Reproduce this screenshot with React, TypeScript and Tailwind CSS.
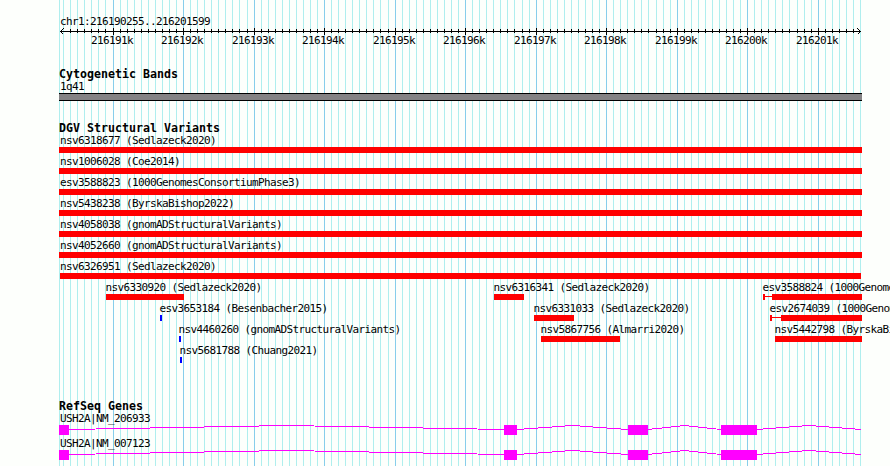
import React from 'react';

interface Feature {
  name: string;
  start: number;
  end: number;
  color?: string;
  // small leading block, joined to the body by a thin line
  leadEnd?: number;
  bodyStart?: number;
}

const TRACK_START = 59;
const TRACK_END = 862;
const PX_PER_100 = 7.0516;
const FIRST_MAJOR = 113.03;

const tickIndexes = Array.from({ length: 114 }, (_, i) => i - 7);
const ticks = tickIndexes.map((k) => ({
  x: Math.floor(FIRST_MAJOR + PX_PER_100 * k),
  major: k % 10 === 0,
  label: `${216191 + k / 10}k`
}));
const majorTicks = ticks.filter((tick) => tick.major);

const full = (name: string): Feature[] => [{ name, start: TRACK_START, end: TRACK_END }];

const variantRows: Feature[][] = [
  full('nsv6318677 (Sedlazeck2020)'),
  full('nsv1006028 (Coe2014)'),
  full('esv3588823 (1000GenomesConsortiumPhase3)'),
  full('nsv5438238 (ByrskaBishop2022)'),
  full('nsv4058038 (gnomADStructuralVariants)'),
  full('nsv4052660 (gnomADStructuralVariants)'),
  [{ name: 'nsv6326951 (Sedlazeck2020)', start: 60, end: 861 }],
  [
    { name: 'nsv6330920 (Sedlazeck2020)', start: 106, end: 184 },
    { name: 'nsv6316341 (Sedlazeck2020)', start: 494, end: 524 },
    { name: 'esv3588824 (1000GenomesConsortiumPhase3)', start: 763, end: TRACK_END, leadEnd: 765, bodyStart: 772 }
  ],
  [
    { name: 'esv3653184 (Besenbacher2015)', start: 160, end: 162, color: '#0000ff' },
    { name: 'nsv6331033 (Sedlazeck2020)', start: 534, end: 574 },
    { name: 'esv2674039 (1000GenomesConsortiumPhase3)', start: 770, end: TRACK_END, leadEnd: 772, bodyStart: 781 }
  ],
  [
    { name: 'nsv4460260 (gnomADStructuralVariants)', start: 179, end: 181, color: '#0000ff' },
    { name: 'nsv5867756 (Almarri2020)', start: 541, end: 620 },
    { name: 'nsv5442798 (ByrskaBishop2022)', start: 775, end: TRACK_END }
  ],
  [{ name: 'nsv5681788 (Chuang2021)', start: 180, end: 182, color: '#0000ff' }]
];

const genes = ['USH2A|NM_206933', 'USH2A|NM_007123'];
const exons = [[59, 69], [504, 517], [628, 648], [721, 757]];
const introns = [[69, 504], [517, 628], [648, 721], [757, 861]];

const Heading: React.FC<{ children: React.ReactNode }> = ({ children }) => (
  <h2 className="h-3 pl-[59px] text-[11.63px] leading-3 font-bold tracking-normal whitespace-pre">{children}</h2>
);

const Grid: React.FC = () => (
  <svg className="absolute inset-0" width="890" height="466" shapeRendering="crispEdges">
    <rect x={TRACK_START} y="0" width="1" height="466" fill="#afeeee" />
    {ticks.map((tick) => (
      <rect key={tick.x} x={tick.x} y="0" width="1" height="466" fill={tick.major ? '#87ceeb' : '#afeeee'} />
    ))}
  </svg>
);

const Ruler: React.FC = () => (
  <div className="flex flex-col">
    <svg className="block" width="890" height="8" shapeRendering="crispEdges">
      <rect x="60" y="4" width="801" height="1" />
      {ticks.slice(1, -1).map((tick) => (
        <rect key={tick.x} x={tick.x} y={tick.major ? 1 : 2} width="1" height={tick.major ? 7 : 4} />
      ))}
      <path d="M63.5 1.5L60.5 4.5L63.5 7.5M857.5 1.5L860.5 4.5L857.5 7.5" fill="none" stroke="black" />
    </svg>
    <div className="flex h-[11px] -mt-px pl-[91px]">
      {majorTicks.map((tick, index) => (
        <span
          key={tick.x}
          className="shrink-0 whitespace-nowrap"
          style={{ width: index < majorTicks.length - 1 ? majorTicks[index + 1].x - tick.x : 43 }}
        >
          {tick.label}
        </span>
      ))}
    </div>
  </div>
);

const FeatureBar: React.FC<{ feature: Feature }> = ({ feature }) => {
  const { start, end, leadEnd, bodyStart = start, color = '#ff0000' } = feature;
  return (
    <div className="flex h-1.5">
      {leadEnd && (
        <>
          <div style={{ width: leadEnd - start, background: color }} />
          <div className="h-px mt-0.5" style={{ width: bodyStart - leadEnd, background: color }} />
        </>
      )}
      <div style={{ width: end - bodyStart, background: color }} />
    </div>
  );
};

const VariantRow: React.FC<{ features: Feature[] }> = ({ features }) => (
  <div className="flex">
    {features.map((feature, index) => {
      const previousEnd = index === 0 ? 0 : features[index - 1].end;
      return (
        <div
          key={feature.name}
          className="flex flex-col shrink-0"
          style={{ marginLeft: feature.start - previousEnd, width: feature.end - feature.start }}
        >
          <span className={`h-[13px] whitespace-pre ${feature.start === TRACK_START ? 'ml-px' : feature.start > 60 ? '-ml-[0.5px]' : ''}`}>
            {feature.name}
          </span>
          <FeatureBar feature={feature} />
        </div>
      );
    })}
  </div>
);

const GeneRow: React.FC<{ name: string }> = ({ name }) => (
  <div className="flex flex-col h-[25px]">
    <div className="h-3 pl-[60px]">{name}</div>
    <svg className="block" width="890" height="13" shapeRendering="crispEdges">
      {introns.map(([start, end]) => (
        <polyline
          key={start}
          points={`${start},5.5 ${(start + end) / 2},1.5 ${end},5.5`}
          fill="none"
          stroke="#ff00ff"
        />
      ))}
      {exons.map(([start, end]) => (
        <rect key={start} x={start} y="1" width={end - start} height="10" fill="#ff00ff" />
      ))}
    </svg>
  </div>
);

const App: React.FC = () => {
  return (
    <div className="relative w-[890px] h-[466px] overflow-hidden bg-[#fdfffc] text-black font-['DejaVu_Sans_Mono',monospace] text-[11px] leading-[14px] tracking-[-0.622px]">
      <Grid />

      <div className="relative flex flex-col pt-[15px]">
        <div className="h-3 pl-[60px]">chr1:216190255..216201599</div>
        <Ruler />

        {/* Cytogenetic band */}
        <section className="flex flex-col pt-[23px]">
          <Heading>Cytogenetic Bands</Heading>
          <div className="h-[13px] pl-[60px]">1q41</div>
          <div className="ml-[59px] w-[803px] h-2 bg-[#848284] border-y border-black" />
        </section>

        {/* Structural variants */}
        <section className="flex flex-col pt-[21px]">
          <Heading>DGV Structural Variants</Heading>
          <div className="flex flex-col gap-0.5 pb-0.5">
            {variantRows.map((features, index) => (
              <VariantRow key={index} features={features} />
            ))}
          </div>
        </section>

        {/* Genes */}
        <section className="flex flex-col pt-[35px]">
          <Heading>RefSeq Genes</Heading>
          {genes.map((gene) => (
            <GeneRow key={gene} name={gene} />
          ))}
        </section>
      </div>
    </div>
  );
};

export default App;
